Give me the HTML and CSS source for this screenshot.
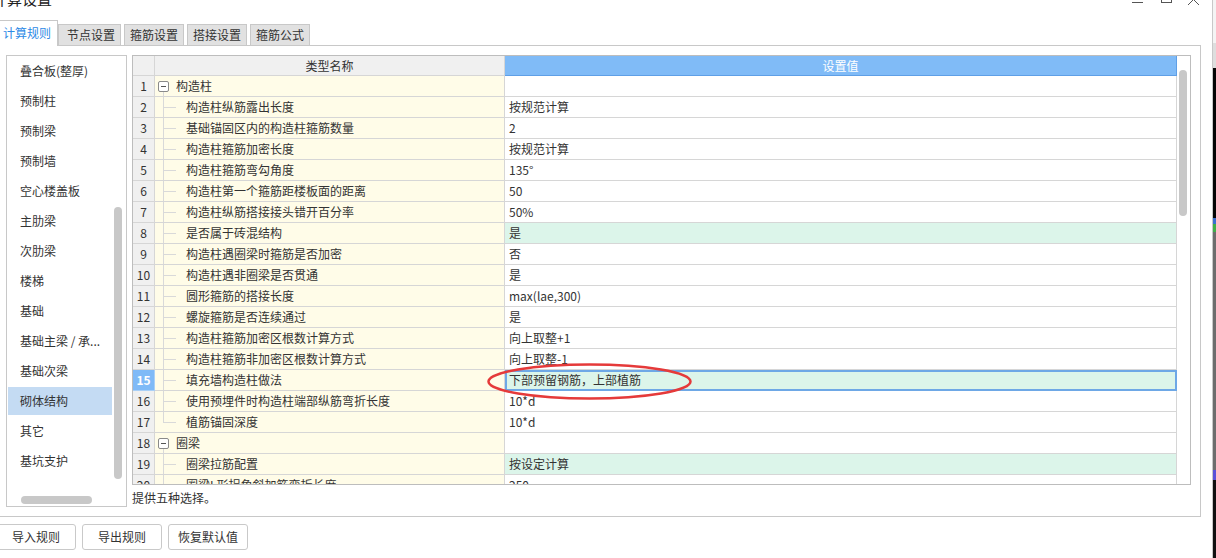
FILE: index.html
```html
<!DOCTYPE html>
<html lang="zh-CN">
<head>
<meta charset="utf-8">
<title>计算设置</title>
<link rel="stylesheet" href="styles.css">
</head>
<body>
<div class="window">
  <div class="titlebar">
    <div class="title">计算设置</div>
    <svg class="winctl" viewBox="0 0 80 20" width="80" height="20">
      <line x1="7" y1="12.5" x2="18" y2="12.5" stroke="#555" stroke-width="1"/>
      <rect x="36.5" y="2.5" width="10" height="10" fill="none" stroke="#555" stroke-width="1"/>
      <line x1="63" y1="4" x2="74" y2="15" stroke="#555" stroke-width="1"/>
      <line x1="74" y1="4" x2="63" y2="15" stroke="#555" stroke-width="1"/>
    </svg>
  </div>
  <div class="tabs">
    <div class="tab active">计算规则</div>
    <div class="tab second">节点设置</div>
    <div class="tab">箍筋设置</div>
    <div class="tab">搭接设置</div>
    <div class="tab">箍筋公式</div>
  </div>
  <div class="panel">
    <div class="listbox">
      <div class="list-main">
        <div class="items">
          <div class="item">叠合板(整厚)</div>
          <div class="item">预制柱</div>
          <div class="item">预制梁</div>
          <div class="item">预制墙</div>
          <div class="item">空心楼盖板</div>
          <div class="item">主肋梁</div>
          <div class="item">次肋梁</div>
          <div class="item">楼梯</div>
          <div class="item">基础</div>
          <div class="item">基础主梁 / 承...</div>
          <div class="item">基础次梁</div>
          <div class="item sel">砌体结构</div>
          <div class="item">其它</div>
          <div class="item">基坑支护</div>
        </div>
        <div class="vbar"><div class="vthumb"></div></div>
      </div>
      <div class="hbar"><div class="hthumb"></div></div>
    </div>
    <div class="right">
      <div class="gridbox">
        <div class="table">
          <div class="row head">
            <div class="cell num"></div>
            <div class="cell name hname">类型名称</div>
            <div class="cell val">设置值</div>
          </div>
          <div class="row"><div class="cell num">1</div><div class="cell name"><span class="tree parent"><span class="box"></span></span>构造柱</div><div class="cell val"></div></div>
          <div class="row"><div class="cell num">2</div><div class="cell name"><span class="tree mid"></span>构造柱纵筋露出长度</div><div class="cell val">按规范计算</div></div>
          <div class="row"><div class="cell num">3</div><div class="cell name"><span class="tree mid"></span>基础锚固区内的构造柱箍筋数量</div><div class="cell val">2</div></div>
          <div class="row"><div class="cell num">4</div><div class="cell name"><span class="tree mid"></span>构造柱箍筋加密长度</div><div class="cell val">按规范计算</div></div>
          <div class="row"><div class="cell num">5</div><div class="cell name"><span class="tree mid"></span>构造柱箍筋弯勾角度</div><div class="cell val">135°</div></div>
          <div class="row"><div class="cell num">6</div><div class="cell name"><span class="tree mid"></span>构造柱第一个箍筋距楼板面的距离</div><div class="cell val">50</div></div>
          <div class="row"><div class="cell num">7</div><div class="cell name"><span class="tree mid"></span>构造柱纵筋搭接接头错开百分率</div><div class="cell val">50%</div></div>
          <div class="row"><div class="cell num">8</div><div class="cell name"><span class="tree mid"></span>是否属于砖混结构</div><div class="cell val green">是</div></div>
          <div class="row"><div class="cell num">9</div><div class="cell name"><span class="tree mid"></span>构造柱遇圈梁时箍筋是否加密</div><div class="cell val">否</div></div>
          <div class="row"><div class="cell num">10</div><div class="cell name"><span class="tree mid"></span>构造柱遇非圈梁是否贯通</div><div class="cell val">是</div></div>
          <div class="row"><div class="cell num">11</div><div class="cell name"><span class="tree mid"></span>圆形箍筋的搭接长度</div><div class="cell val">max(lae,300)</div></div>
          <div class="row"><div class="cell num">12</div><div class="cell name"><span class="tree mid"></span>螺旋箍筋是否连续通过</div><div class="cell val">是</div></div>
          <div class="row"><div class="cell num">13</div><div class="cell name"><span class="tree mid"></span>构造柱箍筋加密区根数计算方式</div><div class="cell val">向上取整+1</div></div>
          <div class="row"><div class="cell num">14</div><div class="cell name"><span class="tree mid"></span>构造柱箍筋非加密区根数计算方式</div><div class="cell val">向上取整-1</div></div>
          <div class="row"><div class="cell num cur">15</div><div class="cell name"><span class="tree mid"></span>填充墙构造柱做法</div><div class="cell val green focus">下部预留钢筋，上部植筋</div></div>
          <div class="row"><div class="cell num">16</div><div class="cell name"><span class="tree mid"></span>使用预埋件时构造柱端部纵筋弯折长度</div><div class="cell val">10*d</div></div>
          <div class="row"><div class="cell num">17</div><div class="cell name"><span class="tree last"></span>植筋锚固深度</div><div class="cell val">10*d</div></div>
          <div class="row"><div class="cell num">18</div><div class="cell name"><span class="tree parent"><span class="box"></span></span>圈梁</div><div class="cell val"></div></div>
          <div class="row"><div class="cell num">19</div><div class="cell name"><span class="tree mid"></span>圈梁拉筋配置</div><div class="cell val green">按设定计算</div></div>
          <div class="row"><div class="cell num">20</div><div class="cell name"><span class="tree mid"></span>圈梁L形拐角斜加筋弯折长度</div><div class="cell val">250</div></div>
        </div>
        <div class="gscroll"><div class="gthumb"></div></div>
        <svg class="mark" width="206" height="38" viewBox="0 0 206 38">
          <ellipse cx="102.5" cy="18.5" rx="101" ry="17" fill="none" stroke="#e53a3a" stroke-width="2.5"/>
        </svg>
      </div>
      <div class="desc">提供五种选择。</div>
    </div>
  </div>
  <div class="buttons">
    <button class="btn">导入规则</button>
    <button class="btn">导出规则</button>
    <button class="btn">恢复默认值</button>
  </div>
</div>
<div class="edge"></div>
<div class="desktop"></div>
</body>
</html>
```
FILE: styles.css
```css
* { box-sizing: border-box; }
html, body { margin: 0; padding: 0; }
body {
  width: 1216px;
  height: 558px;
  overflow: hidden;
  display: flex;
  font-family: "Noto Sans CJK SC", "Microsoft YaHei", sans-serif;
  font-size: 12px;
  color: #333;
  background: #fff;
}
.window {
  width: 1212px;
  height: 558px;
  flex: none;
  display: flex;
  flex-direction: column;
  background: #fff;
  overflow: hidden;
}
.edge { width: 1px; flex: none; background: #c8c8c8; }
.desktop {
  flex: 1;
  background: linear-gradient(to bottom,
    #f4f4f4 0, #f4f4f4 43px,
    #dedede 43px, #dedede 68px,
    #050505 68px, #050505 218px,
    #3a6fd0 218px, #3a6fd0 224px,
    #3fae48 224px, #3fae48 232px,
    #6d6d6d 232px, #6d6d6d 470px,
    #5a4fd8 470px, #5a4fd8 480px,
    #111 480px, #111 558px);
}

/* title bar */
.titlebar {
  height: 20px;
  display: flex;
  justify-content: space-between;
  align-items: flex-start;
}
.title {
  font-size: 15px;
  line-height: 15px;
  margin: -9px 0 0 -8px;
  color: #222;
}
.winctl { margin: -10px 7px 0 0; display: block; }

/* tabs */
.tabs {
  height: 25px;
  display: flex;
  align-items: flex-end;
  gap: 3px;
  position: relative;
  z-index: 1;
}
.tab {
  height: 21px;
  padding: 0 5px;
  border: 1px solid #c8c8c8;
  border-bottom: none;
  background: #e1e1e1;
  line-height: 20px;
  color: #333;
  white-space: nowrap;
}
.tab.active {
  height: 26px;
  margin: 0 -3px -1px -4px;
  padding: 0 6px;
  background: #fff;
  color: #2d8ae6;
  line-height: 24px;
}
.tab.second { padding: 0 5px 0 8px; }

/* panel */
.panel {
  width: 1201px;
  height: 472px;
  border: 1px solid #c8c8c8;
  border-left: none;
  padding: 9px 9px 9px 6px;
  display: flex;
  gap: 5px;
}

/* left list */
.listbox {
  width: 121px;
  height: 452px;
  flex: none;
  border: 1px solid #c8c8c8;
  display: flex;
  flex-direction: column;
}
.list-main { height: 433px; display: flex; }
.items {
  flex: 1;
  overflow: hidden;
  display: flex;
  flex-direction: column;
  gap: 2px;
  padding-top: 1px;
}
.item {
  height: 28px;
  flex: none;
  margin: 0 2px 0 1px;
  padding-left: 12px;
  line-height: 28px;
  white-space: nowrap;
  color: #333;
}
.item.sel { background: #c4dbf3; }
.vbar { width: 12px; flex: none; }
.vthumb {
  margin-top: 151px;
  width: 8px;
  height: 272px;
  border-radius: 4px;
  background: #c8c8c8;
}
.hbar { height: 17px; }
.hthumb {
  margin: 7px 0 0 14px;
  width: 71px;
  height: 8px;
  border-radius: 4px;
  background: #c8c8c8;
}

/* grid */
.right { flex: 1; display: flex; flex-direction: column; }
.gridbox {
  height: 430px;
  border: 1px solid #bdbdbd;
  display: flex;
  position: relative;
}
.table { width: 1044px; flex: none; overflow: hidden; }
.gscroll { flex: 1; }
.gthumb {
  margin: 14px 0 0 2px;
  width: 8px;
  height: 146px;
  border-radius: 4px;
  background: #c8c8c8;
}
.row { display: flex; height: 21px; }
.cell {
  height: 100%;
  border-right: 1px solid #d6d6d6;
  border-bottom: 1px solid #d6d6d6;
  line-height: 20px;
  white-space: nowrap;
  overflow: hidden;
  flex: none;
}
.num { width: 22px; text-align: center; background: #f0f0f0; }
.num.cur { background: #7fbaf7; color: #fff; font-weight: bold; border-color: #a9d0f7; }
.name { width: 350px; background: #fffce8; display: flex; }
.val { width: 672px; padding-left: 4px; background: #fff; }
.val.green { background: #dcf5ea; }
.val.focus { outline: 2px solid #6ea8e6; outline-offset: -2px; }
.head { height: 20px; }
.head .cell { line-height: 19px; background: #f0f0f0; text-align: center; }
.head .hname { display: block; }
.head .val { background: #80bbf7; border-color: #5f9fe6; color: #fff; padding-left: 0; }

.tree { width: 31px; height: 20px; flex: none; display: block; }
.tree.mid {
  background:
    linear-gradient(#d9d9d9, #d9d9d9) 8px 0 / 1px 20px no-repeat,
    linear-gradient(#d9d9d9, #d9d9d9) 8px 10px / 13px 1px no-repeat;
}
.tree.last {
  background:
    linear-gradient(#d9d9d9, #d9d9d9) 8px 0 / 1px 11px no-repeat,
    linear-gradient(#d9d9d9, #d9d9d9) 8px 10px / 13px 1px no-repeat;
}
.tree.parent {
  width: 21px;
  padding: 5px 0 0 3px;
  background: linear-gradient(#d9d9d9, #d9d9d9) 8px 16px / 1px 4px no-repeat;
}
.box {
  display: block;
  width: 11px;
  height: 11px;
  border: 1px solid #8a8a8a;
  border-radius: 2px;
  background: linear-gradient(#555, #555) center / 5px 1px no-repeat #fff;
}

.mark {
  position: absolute;
  left: 354px;
  top: 307px;
  overflow: visible;
}

.desc { margin-top: 3px; line-height: 20px; color: #333; }

/* buttons */
.buttons { display: flex; gap: 6px; margin: 7px 0 0 -4px; }
.btn {
  width: 80px;
  height: 26px;
  border: 1px solid #c9c9c9;
  border-radius: 3px;
  background: #fff;
  font-family: inherit;
  font-size: 12px;
  color: #333;
  line-height: 24px;
  text-align: center;
  padding: 0;
}
```
